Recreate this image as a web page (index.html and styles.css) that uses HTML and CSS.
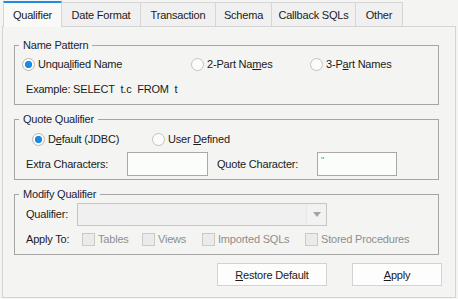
FILE: index.html
```html
<!DOCTYPE html>
<html lang="en">
  <head>
    <meta charset="UTF-8" />
    <title>Qualifier Options</title>
    <link rel="stylesheet" href="styles.css">
  </head>
  <body>
    <div class="tabs">
      <div class="tab active w-qualifier">Qualifier</div>
      <div class="tab w-date">Date Format</div>
      <div class="tab w-trans">Transaction</div>
      <div class="tab w-schema">Schema</div>
      <div class="tab w-callback">Callback SQLs</div>
      <div class="tab w-other">Other</div>
    </div>

    <div class="panel">
      <fieldset class="group">
        <legend>Name Pattern</legend>
        <div class="row radios name-radios">
          <label class="radio r-unq"><input type="radio" name="pattern" checked /><span>Unqua<u>l</u>ified Name</span></label>
          <label class="radio r-two"><input type="radio" name="pattern" /><span>2-Part Na<u>m</u>es</span></label>
          <label class="radio"><input type="radio" name="pattern" /><span>3-P<u>a</u>rt Names</span></label>
        </div>
        <div class="row example">Example: SELECT&nbsp; t.c&nbsp; FROM&nbsp; t</div>
      </fieldset>

      <fieldset class="group quote">
        <legend>Quote Qualifier</legend>
        <div class="row radios quote-radios">
          <label class="radio r-def"><input type="radio" name="quote" checked /><span>D<u>e</u>fault (JDBC)</span></label>
          <label class="radio"><input type="radio" name="quote" /><span>User <u>D</u>efined</span></label>
        </div>
        <div class="row fields">
          <span class="lbl lbl-extra">Extra Characters:</span>
          <input class="text" type="text" value="" />
          <span class="lbl lbl-quote">Quote Character:</span>
          <input class="text text-quote" type="text" value="&quot;" />
        </div>
      </fieldset>

      <fieldset class="group modify">
        <legend>Modify Qualifier</legend>
        <div class="row combo-row">
          <span class="lbl lbl-qual">Qualifier:</span>
          <div class="combo">
            <div class="combo-btn"><span class="arrow"></span></div>
          </div>
        </div>
        <div class="row checks">
          <span class="lbl lbl-apply">Apply To:</span>
          <label class="check c-tables"><span class="box"></span>Tables</label>
          <label class="check c-views"><span class="box"></span>Views</label>
          <label class="check c-imported"><span class="box"></span>Imported SQLs</label>
          <label class="check"><span class="box"></span>Stored Procedures</label>
        </div>
      </fieldset>

      <div class="buttons">
        <button class="btn btn-restore"><u>R</u>estore Default</button>
        <button class="btn btn-apply"><u>A</u>pply</button>
      </div>
    </div>
  </body>
</html>
```

FILE: styles.css
```css
body {
  margin: 0;
  width: 458px;
  height: 299px;
  overflow: hidden;
  background-color: #f4f5f2;
  font-family: "Liberation Sans", Arial, sans-serif;
  font-size: 11px;
  letter-spacing: -0.2px;
  color: #1b1b1b;
}

u {
  text-decoration-thickness: 1px;
  text-underline-offset: 1px;
}

/* Tab strip */
.tabs {
  display: flex;
  align-items: flex-end;
  height: 26px;
  padding-left: 3px;
  box-sizing: border-box;
}

.tab {
  box-sizing: border-box;
  height: 24px;
  display: flex;
  align-items: center;
  justify-content: center;
  border: 1px solid #d6d6d6;
  border-left: none;
  border-bottom: none;
  background-color: #f0f0f0;
}

.tab.active {
  position: relative;
  z-index: 1;
  height: 26px;
  margin-bottom: -1px;
  padding-bottom: 1px;
  border-left: 1px solid #d6d6d6;
  border-top: 2px solid #1e8de0;
  background-color: #f9faf8;
}

.w-qualifier { width: 59px; }
.w-date { width: 79px; }
.w-trans { width: 75px; }
.w-schema { width: 56px; }
.w-callback { width: 84px; }
.w-other { width: 47px; }

/* Page panel */
.panel {
  box-sizing: border-box;
  width: 454px;
  height: 272px;
  margin-left: 2px;
  padding: 11px 0 0 11px;
  border: 1px solid #d4d4d4;
  background-color: #f4f5f2;
}

.group {
  width: 425px;
  box-sizing: border-box;
  margin: 0;
  padding: 0 0 2px 0;
  border: 1px solid #a6a6a6;
}

.group legend {
  margin-left: 4px;
  padding: 0 4px;
  line-height: 14px;
  color: #1c2236;
}

.quote,
.modify {
  margin-top: 7px;
  padding-bottom: 3px;
}

.row {
  display: flex;
  align-items: center;
}

/* Radio buttons */
.radios {
  height: 24px;
}

.name-radios {
  padding-left: 7px;
}

.quote-radios {
  height: 26px;
  padding-left: 17px;
}

.radio {
  display: flex;
  align-items: center;
}

.radio input {
  appearance: none;
  width: 13px;
  height: 13px;
  margin: 0 3px 0 0;
  border: 1px solid #c2c2c2;
  border-radius: 50%;
  background-color: #fcfcfc;
}

.radio input:checked {
  background: radial-gradient(circle, #1b8ae3 0 3.3px, #fcfcfc 4px);
  border-color: #b6b6b6;
}

.r-unq { width: 169px; }
.r-two { width: 119px; }
.r-def { width: 120px; }

.example {
  height: 26px;
  padding-left: 11px;
}

/* Text fields */
.fields {
  height: 24px;
  padding-left: 11px;
}

.lbl-extra { width: 101px; }
.lbl-quote { width: 100px; margin-left: 9px; }

.text {
  box-sizing: border-box;
  width: 81px;
  height: 24px;
  margin: 0;
  padding: 0 3px 8px;
  border: 1px solid #a9a9a9;
  background-color: #fbfdfa;
  font-family: inherit;
  font-size: 9px;
  color: #5a8cc0;
}

.text-quote {
  width: 80px;
}

/* Combo box */
.combo-row {
  height: 26px;
  padding-left: 11px;
}

.lbl-qual { width: 51px; }

.combo {
  box-sizing: border-box;
  width: 250px;
  height: 23px;
  display: flex;
  justify-content: flex-end;
  border: 1px solid #c6c6c6;
  background-color: #f0f0f0;
}

.combo-btn {
  width: 19px;
  display: flex;
  align-items: center;
  justify-content: center;
  border-left: 1px solid #e8e8e8;
  background-color: #f2f2f2;
}

.arrow {
  width: 0;
  height: 0;
  border-left: 4px solid transparent;
  border-right: 4px solid transparent;
  border-top: 5px solid #a4a4a4;
}

/* Check boxes */
.checks {
  height: 24px;
  padding-left: 11px;
}

.lbl-apply { width: 56px; }

.check {
  display: flex;
  align-items: center;
  color: #8e8e8e;
}

.check .box {
  box-sizing: border-box;
  width: 13px;
  height: 13px;
  margin-right: 3px;
  border: 1px solid #cacaca;
  background-color: #ebebeb;
}

.c-tables { width: 60px; }
.c-views { width: 60px; }
.c-imported { width: 103px; }

/* Buttons */
.buttons {
  display: flex;
  justify-content: flex-end;
  gap: 25px;
  width: 428px;
  margin-top: 8px;
}

.btn {
  box-sizing: border-box;
  height: 23px;
  border: 1px solid #d3d3d3;
  background-color: #fdfdfd;
  font-family: inherit;
  font-size: 11px;
  letter-spacing: inherit;
  color: #1b1b1b;
  padding: 0;
}

.btn-restore { width: 110px; }
.btn-apply { width: 90px; }
```
